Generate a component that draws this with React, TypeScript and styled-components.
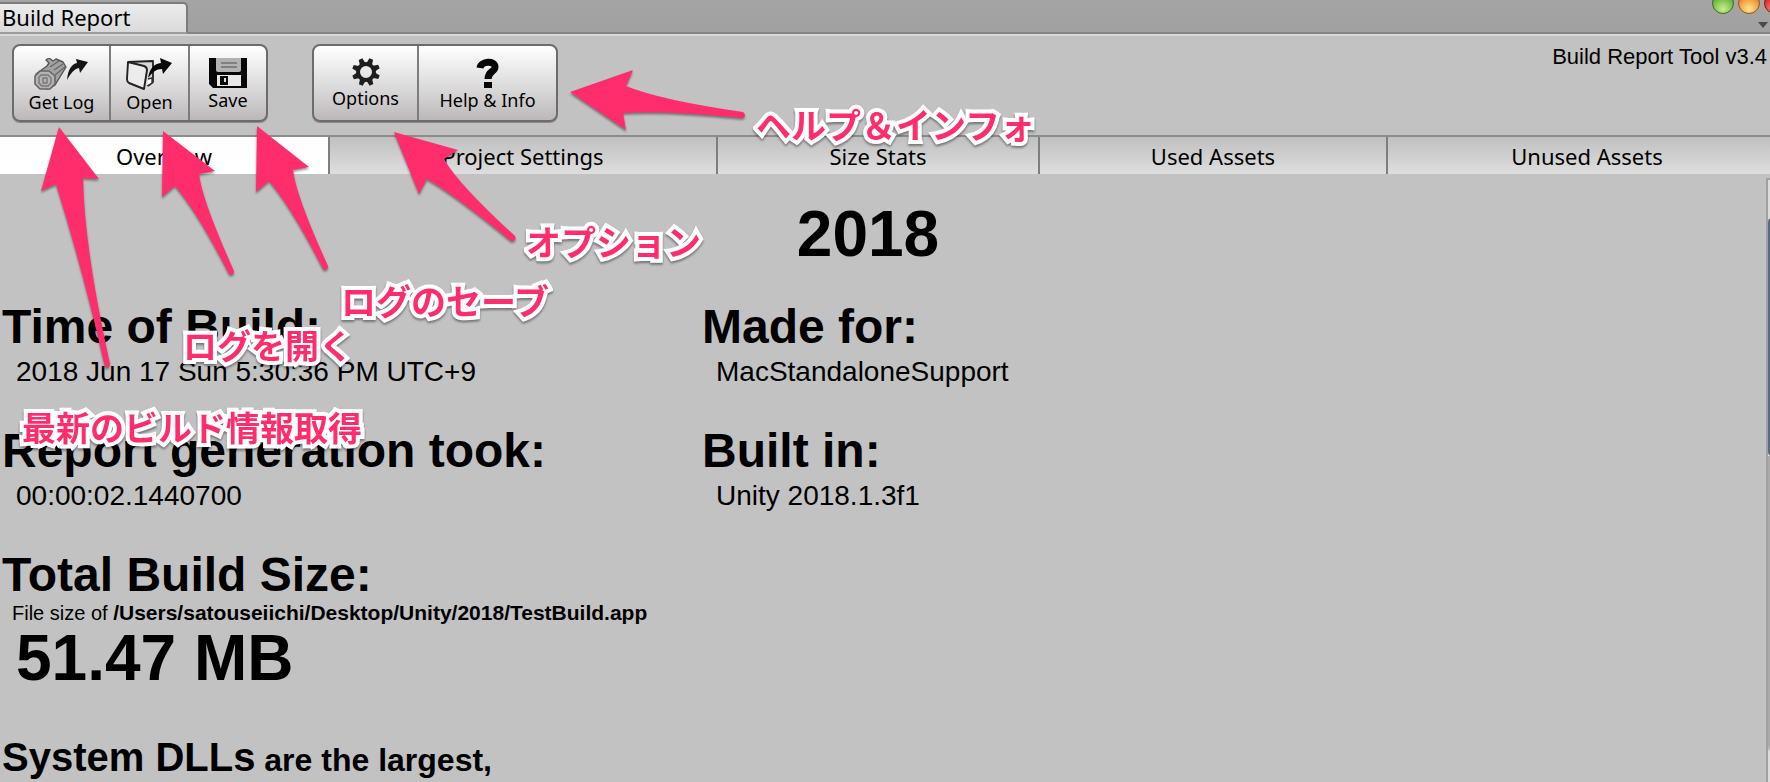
import React from "react";
import styled, { createGlobalStyle } from "styled-components";

const UI_FONT = `"Noto Sans", "Lucida Grande", sans-serif`;
const BODY_FONT = `"Liberation Sans", Arial, sans-serif`;
const PINK = "#ff2d6c";

const GlobalStyle = createGlobalStyle`
  * { box-sizing: border-box; }
  body { margin: 0; background: #c2c2c2; color: #000; font-family: ${BODY_FONT}; }
  button { margin: 0; border: 0; padding: 0; background: none; color: inherit; font-family: ${UI_FONT}; }
  h1, h2, p, dl, dt, dd { margin: 0; }
`;

const Viewport = styled.div`
  position: relative;
  height: 100vh;
  overflow: hidden;
`;

/* The window runs slightly past the right edge of the view. */
const Window = styled.div`
  display: flex;
  flex-direction: column;
  width: calc(100% + 18px);
  height: 100%;
`;

const TitleBar = styled.header`
  display: flex;
  justify-content: space-between;
  flex: none;
  height: 36px;
  background: linear-gradient(#a5a5a5, #a0a0a0);
  border-bottom: 2px solid #d8d8d8;
  box-shadow: inset 0 -2px #858585;
`;

const WindowTab = styled.button`
  align-self: flex-end;
  width: 188px;
  height: 32px;
  padding: 0 0 2px 2px;
  text-align: left;
  font-size: 22px;
  line-height: 26px;
  background: linear-gradient(#ececec, #dadada);
  border-top: 2px solid #7c7c7c;
  border-right: 2px solid #7c7c7c;
  border-bottom: 2px solid #9c9c9c;
  border-top-right-radius: 5px;
`;

const WindowControls = styled.div`
  display: flex;
  flex-direction: column;
  align-items: flex-end;
  gap: 8px;
  margin-top: -8px;
`;

const Lights = styled.div`
  display: flex;
  gap: 4px;
  padding-right: 2px;
`;

const Light = styled.button<{ $edge: string; $mid: string; $glow: string }>`
  width: 22px;
  height: 22px;
  border-radius: 50%;
  border: 1px solid ${(p) => p.$edge};
  background: radial-gradient(circle at 50% 80%, ${(p) => p.$glow} 0, ${(p) => p.$mid} 55%, ${(p) => p.$edge} 100%);
`;

const PaneMenu = styled.button`
  display: flex;
  margin-right: 20px;
`;

const Toolbar = styled.div`
  display: flex;
  align-items: flex-start;
  flex: none;
  height: 99px;
  padding: 8px 21px 0 12px;
`;

const ButtonGroup = styled.div`
  display: flex;
  height: 78px;
  margin-right: 44px;
  border: 2px solid #6c6c6c;
  border-radius: 8px;
  background: linear-gradient(#ffffff, #dcdbdc 55%, #bcb8ba);
  box-shadow: 0 1px #8a8a8a;
`;

const ToolButton = styled.button<{ $width: number }>`
  display: flex;
  flex-direction: column;
  align-items: center;
  width: ${(p) => p.$width}px;
  padding-top: 12px;
  font-size: 18px;
  line-height: 24px;
  white-space: nowrap;

  & + & { border-left: 2px solid #7d7d7d; }
  svg { display: block; flex: none; }
`;

const Version = styled.p`
  margin-left: auto;
  font-size: 22px;
  line-height: 26px;
`;

const Tabs = styled.nav`
  display: grid;
  grid-template-columns: 330fr 388fr 322fr 348fr 400fr;
  flex: none;
  height: 39px;
  border-top: 2px solid #8c8c8c;
`;

const Tab = styled.button<{ $active?: boolean }>`
  font-size: 22px;
  line-height: 36px;
  border-right: 2px solid #7e7e7e;
  background: ${(p) => (p.$active ? "linear-gradient(#fdfdfd, #ffffff)" : "linear-gradient(#c0c0c0, #dedede)")};
`;

const Body = styled.div`
  display: flex;
  flex: 1;
  min-height: 0;
`;

const Report = styled.main`
  flex: 1;
  padding: 24px 32px 0 2px;
  overflow: hidden;
`;

const ProjectName = styled.h1`
  font-size: 64px;
  line-height: 72px;
  margin-bottom: 29px;
  text-align: center;
`;

const Facts = styled.dl`
  display: grid;
  grid-template-columns: 700px 1fr;
  row-gap: 34px;
  margin-bottom: 34px;
`;

const FactName = styled.dt`
  font-size: 48px;
  font-weight: bold;
  line-height: 56px;
`;

const FactValue = styled.dd`
  padding-left: 14px;
  font-size: 28px;
  line-height: 34px;
`;

const SectionTitle = styled.h2`
  font-size: 48px;
  line-height: 56px;
`;

const PathLine = styled.p`
  padding-left: 10px;
  font-size: 20px;
  line-height: 20px;
  b { font-size: 21px; }
`;

const TotalSize = styled.p`
  padding-left: 14px;
  margin-bottom: 40px;
  font-size: 64px;
  font-weight: bold;
  line-height: 70px;
`;

const Largest = styled.p`
  font-size: 32px;
  font-weight: bold;
  line-height: 48px;
  strong { font-size: 40px; }
`;

const ScrollTrack = styled.div`
  flex: none;
  display: flex;
  flex-direction: column;
  width: 22px;
  margin-top: 4px;
  padding: 38px 0 28px;
  border: 2px solid #a0a0a0;
  border-bottom: 0;
  background: #dcdcdc;
`;

const ScrollGroove = styled.div`
  flex: 1;
  border-radius: 0 0 8px 8px;
  background: linear-gradient(90deg, #a9a9a9, #c6c6c6);
`;

const ScrollThumb = styled.div`
  height: 238px;
  border-radius: 4px;
  background: #566a8c;
`;

const Annotations = styled.div`
  position: absolute;
  inset: 0;
  pointer-events: none;
`;

const Arrows = styled.svg`
  position: absolute;
  left: 0;
  top: 0;
  fill: ${PINK};
  filter: drop-shadow(0 2px 1px rgba(0, 0, 0, 0.4));
`;

const Note = styled.span<{ $x: number; $y: number; $size: number }>`
  position: absolute;
  left: ${(p) => p.$x}px;
  top: ${(p) => p.$y}px;
  font-family: "Noto Sans CJK JP", sans-serif;
  font-size: ${(p) => p.$size}px;
  font-weight: bold;
  line-height: 40px;
  white-space: nowrap;
  color: ${PINK};
  -webkit-text-stroke: 8px #fff;
  paint-order: stroke fill;
  stroke-linejoin: round;
  filter: drop-shadow(0 2px 1px rgba(0, 0, 0, 0.4));
`;

const LogIcon = () => (
  <svg width="56" height="32" viewBox="0 0 56 32" aria-hidden="true">
    <path d="M2 16 L13 8 L15 5 L12 2 L15 0 L19 3 L22 1 L29 4 L32 9 L29 14 L21 27 L13 31 Z" fill="#a2a2a2" stroke="#555" strokeWidth="1.4" strokeLinejoin="round" />
    <path d="M16 9 L25 3 M20 12 L29 6 M21 17 L31 9" stroke="#666" strokeWidth="1.3" />
    <path d="M6 13 H15 L21 18 V26 L16 31 H6 L1 26 V18 Z" fill="#b4b4b4" stroke="#666" strokeWidth="1.6" />
    <path d="M7 17 H14 L17 20 V25 L14 28 H8 L5 25 V19 Z M9 20 H13 V25 H9 Z" fill="none" stroke="#777" strokeWidth="1.4" />
    <path d="M33 22 C34 11 38 6 43 5 L42 1 L54 4 L46 15 L45 10 C40 11 37 15 33 22 Z" fill="#151515" />
  </svg>
);

const OpenIcon = () => (
  <svg width="48" height="32" viewBox="0 0 48 32" aria-hidden="true">
    <path d="M2 4 L27 3 V24 L22 28" fill="#d8d8d8" stroke="#222" strokeWidth="1.8" strokeLinejoin="round" />
    <path d="M22 21 L26 20 L26 25 L21 28" fill="#fff" stroke="#333" strokeWidth="1.4" />
    <path d="M2 4 L18 8 Q21 9 21 12 L18 31 L3 25 Q1 24 1 21 Z" fill="#ececec" stroke="#222" strokeWidth="1.9" strokeLinejoin="round" />
    <path d="M22 20 C24 10 28 6 35 5 L34 0 L46 5 L37 16 L36 11 C30 11 27 14 22 20 Z" fill="#080808" />
  </svg>
);

const SaveIcon = () => (
  <svg width="38" height="30" viewBox="0 0 38 30" aria-hidden="true">
    <path d="M0 0 H38 V30 H4 L0 26 Z" fill="#060606" />
    <path d="M7 0 H32 V12 Q32 14 30 14 H9 Q7 14 7 12 Z" fill="#b2b2b2" />
    <path d="M12 5 H28 M12 9 H28" stroke="#707070" strokeWidth="1.5" />
    <rect x="8" y="17" width="24" height="11" fill="#e8e8e8" />
    <rect x="11" y="18" width="8" height="9" fill="#0b0b0b" />
    <rect x="15" y="20" width="2" height="4" fill="#ddd" />
  </svg>
);

const GearIcon = () => (
  <svg width="28" height="28" viewBox="0 0 28 28" aria-hidden="true">
    <circle cx="14" cy="14" r="8" fill="none" stroke="#1e1e1e" strokeWidth="4" />
    {[0, 45, 90, 135, 180, 225, 270, 315].map((angle) => (
      <path key={angle} d="M11 6 L12 0 H16 L17 6 Z" fill="#1e1e1e" transform={`rotate(${angle + 22} 14 14)`} />
    ))}
  </svg>
);

const HelpIcon = () => (
  <svg width="24" height="30" viewBox="0 0 24 30" aria-hidden="true">
    <path d="M4 10 C5 3 19 2 19 9 C19 14 12 13 12 21" fill="none" stroke="#050505" strokeWidth="7" />
    <rect x="8" y="24" width="8" height="6" fill="#050505" />
  </svg>
);

const fileTools = [
  { label: "Get Log", width: 95, Icon: LogIcon },
  { label: "Open", width: 79, Icon: OpenIcon },
  { label: "Save", width: 78, Icon: SaveIcon },
];

const appTools = [
  { label: "Options", width: 103, Icon: GearIcon },
  { label: "Help & Info", width: 139, Icon: HelpIcon },
];

const tabs = ["Overview", "Project Settings", "Size Stats", "Used Assets", "Unused Assets"];

const facts = [
  ["Time of Build:", "2018 Jun 17 Sun 5:30:36 PM UTC+9"],
  ["Made for:", "MacStandaloneSupport"],
  ["Report generation took:", "00:00:02.1440700"],
  ["Built in:", "Unity 2018.1.3f1"],
];

const arrows = [
  "M59 127 L99 179 L83 178 Q84 246 110 364 Q109 369 105 367 Q83 270 56 184 L41 191 Z",
  "M163 131 L215 171 L199 174 Q202 200 234 271 Q234 276 229 274 Q198 213 175 186 L162 197 Z",
  "M257 126 L309 167 L293 170 Q296 196 328 266 Q328 271 323 269 Q292 208 269 181 L256 192 Z",
  "M394 132 L458 150 L444 159 Q458 184 515 236 Q517 241 511 241 Q456 196 427 179 L419 194 Z",
  "M570 92 L633 70 L626 86 Q660 100 743 112 Q747 115 743 118 Q660 110 623 113 L626 130 Z",
];

const notes = [
  { text: "ヘルプ＆インフォ", x: 756, y: 104, size: 35 },
  { text: "オプション", x: 526, y: 221, size: 35 },
  { text: "ログのセーブ", x: 341, y: 280, size: 35 },
  { text: "ログを開く", x: 183, y: 325, size: 34 },
  { text: "最新のビルド情報取得", x: 22, y: 407, size: 34 },
];

const ToolGroup = ({ tools }: { tools: typeof fileTools }) => (
  <ButtonGroup>
    {tools.map(({ label, width, Icon }) => (
      <ToolButton key={label} type="button" $width={width}>
        <Icon />
        {label}
      </ToolButton>
    ))}
  </ButtonGroup>
);

export default function App() {
  return (
    <Viewport>
      <GlobalStyle />
      <Window>
        <TitleBar>
          <WindowTab type="button">Build Report</WindowTab>
          <WindowControls>
            <Lights>
              <Light type="button" aria-label="Zoom" $edge="#3f6b22" $mid="#76bd45" $glow="#c8ee8e" />
              <Light type="button" aria-label="Minimize" $edge="#a5511c" $mid="#f09a3e" $glow="#ffe98c" />
              <Light type="button" aria-label="Close" $edge="#8f1414" $mid="#e23a3a" $glow="#ff9c94" />
            </Lights>
            <PaneMenu type="button" aria-label="Pane menu">
              <svg width="10" height="6" viewBox="0 0 10 6">
                <path d="M0 0 H10 L5 6 Z" fill="#4a4a4a" />
              </svg>
            </PaneMenu>
          </WindowControls>
        </TitleBar>
        <Toolbar>
          <ToolGroup tools={fileTools} />
          <ToolGroup tools={appTools} />
          <Version>Build Report Tool v3.4</Version>
        </Toolbar>
        <Tabs>
          {tabs.map((name, i) => (
            <Tab key={name} type="button" $active={i === 0}>
              {name}
            </Tab>
          ))}
        </Tabs>
        <Body>
          <Report>
            <ProjectName>2018</ProjectName>
            <Facts>
              {facts.map(([name, value]) => (
                <div key={name}>
                  <FactName>{name}</FactName>
                  <FactValue>{value}</FactValue>
                </div>
              ))}
            </Facts>
            <SectionTitle>Total Build Size:</SectionTitle>
            <PathLine>
              File size of <b>/Users/satouseiichi/Desktop/Unity/2018/TestBuild.app</b>
            </PathLine>
            <TotalSize>51.47 MB</TotalSize>
            <Largest>
              <strong>System DLLs</strong> are the largest,
            </Largest>
          </Report>
          <ScrollTrack>
            <ScrollThumb />
            <ScrollGroove />
          </ScrollTrack>
        </Body>
      </Window>
      <Annotations>
        <Arrows width="760" height="380" viewBox="0 0 760 380" aria-hidden="true">
          {arrows.map((d) => (
            <path key={d} d={d} />
          ))}
        </Arrows>
        {notes.map((note) => (
          <Note key={note.text} $x={note.x} $y={note.y} $size={note.size}>
            {note.text}
          </Note>
        ))}
      </Annotations>
    </Viewport>
  );
}
